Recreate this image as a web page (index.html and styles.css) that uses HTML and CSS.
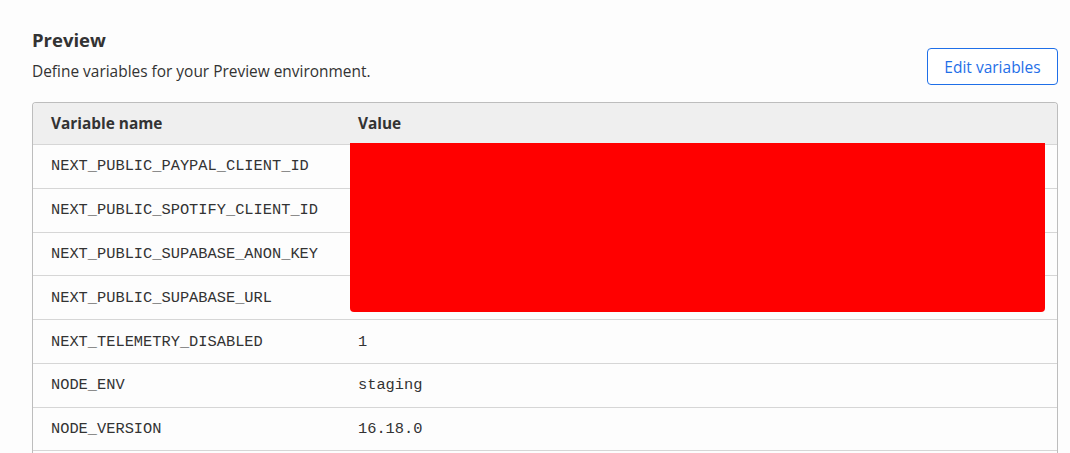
FILE: index.html
```html
<!DOCTYPE html>
<html lang="en">
<head>
<meta charset="UTF-8">
<meta name="viewport" content="width=device-width, initial-scale=1.0">
<title>Preview environment variables</title>
<link rel="stylesheet" href="styles.css">
</head>
<body>
<div class="section">
  <div class="section-head">
    <div>
      <h2>Preview</h2>
      <p class="desc">Define variables for your Preview environment.</p>
    </div>
    <button class="edit-btn">Edit variables</button>
  </div>

  <div class="vars">
    <div class="row head">
      <div>Variable name</div>
      <div>Value</div>
    </div>
    <div class="row"><div>NEXT_PUBLIC_PAYPAL_CLIENT_ID</div><div></div></div>
    <div class="row"><div>NEXT_PUBLIC_SPOTIFY_CLIENT_ID</div><div></div></div>
    <div class="row"><div>NEXT_PUBLIC_SUPABASE_ANON_KEY</div><div></div></div>
    <div class="row"><div>NEXT_PUBLIC_SUPABASE_URL</div><div></div></div>
    <div class="row"><div>NEXT_TELEMETRY_DISABLED</div><div>1</div></div>
    <div class="row"><div>NODE_ENV</div><div>staging</div></div>
    <div class="row"><div>NODE_VERSION</div><div>16.18.0</div></div>
    <div class="row"><div>&nbsp;</div><div></div></div>
    <!-- redacted values -->
    <div class="redact"></div>
  </div>
</div>
</body>
</html>
```

FILE: styles.css
```css
body {
  font-family: "Open Sans", "Noto Sans", sans-serif;
  background-color: #fdfdfd;
  color: #333;
  margin: 0;
}
.section {
  padding: 28px 12px 0 32px;
}
.section-head {
  display: flex;
  justify-content: space-between;
  align-items: flex-start;
  margin-bottom: 17px;
}
h2 {
  margin: 0;
  font-size: 18.5px;
  line-height: 24px;
  font-weight: 700;
  color: #333;
}
.desc {
  margin: 8px 0 0;
  font-size: 15.45px;
  line-height: 22px;
  color: #333;
}
.edit-btn {
  width: 131px;
  height: 37px;
  margin-top: 20px;
  background-color: #fff;
  color: #1f6fe8;
  border: 1px solid #1f6fe8;
  border-radius: 4px;
  font-family: inherit;
  font-size: 15.5px;
  cursor: pointer;
}
.vars {
  position: relative;
  border: 1px solid #bdbdbd;
  border-bottom: none;
  border-radius: 4px 4px 0 0;
  overflow: hidden;
}
.row {
  display: grid;
  grid-template-columns: 307px 1fr;
  border-top: 1px solid #d6d6d6;
  font-family: "Liberation Mono", monospace;
  font-size: 15.35px;
  line-height: 20px;
  color: #333;
}
.row > div {
  padding: 11.4px 18px;
}
.row.head {
  border-top: none;
  background-color: #efefef;
  font-family: "Open Sans", "Noto Sans", sans-serif;
  font-weight: 700;
  font-size: 15.4px;
}
.row.head > div {
  padding: 10.5px 18px;
}
.redact {
  position: absolute;
  left: 317px;
  top: 40px;
  width: 695px;
  height: 169px;
  background-color: #ff0000;
  border-radius: 0 0 4px 4px;
}
```
